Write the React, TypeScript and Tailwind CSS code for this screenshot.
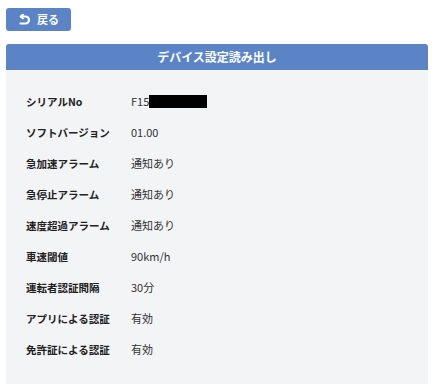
const rows: [string, string][] = [
  ['シリアルNo', 'F15'],
  ['ソフトバージョン', '01.00'],
  ['急加速アラーム', '通知あり'],
  ['急停止アラーム', '通知あり'],
  ['速度超過アラーム', '通知あり'],
  ['車速閾値', '90km/h'],
  ['運転者認証間隔', '30分'],
  ['アプリによる認証', '有効'],
  ['免許証による認証', '有効'],
];

const App = () => {
  return (
    <div
      className="w-[435px] h-[384px] bg-white px-[6px] pt-[8px]"
      style={{ fontFamily: '"Noto Sans CJK JP", "Noto Sans", sans-serif' }}
    >
      <button className="flex items-center gap-[6px] w-[65px] h-[23px] rounded-[3px] bg-[#5b84c7] pl-[13px] text-[11px] font-bold text-white">
        <svg width="12" height="11" viewBox="0 0 12 11" fill="none" stroke="white" strokeWidth="2.2" strokeLinecap="round" strokeLinejoin="round">
          <path d="M1.5 9.5H6.5a3.5 3.5 0 0 0 0-7H2" />
          <path d="M3.8 0.8L1.8 2.5L3.8 4.2" />
        </svg>
        戻る
      </button>

      <div className="mt-[13px] w-[422px] rounded-[3px] overflow-hidden bg-[#f3f4f6]">
        <div className="h-[26px] flex items-center justify-center bg-[#5b84c7] text-[12px] font-bold text-white">
          デバイス設定読み出し
        </div>
        <div className="pl-[20px] pt-[16px] pb-[25px] flex flex-col">
          {rows.map(([label, value], i) => (
            <div key={label} className="flex items-center h-[31px] text-[10.5px] text-[#222]">
              <div className="w-[105px] font-bold">{label}</div>
              <div className="flex items-center font-normal text-[11px] text-[#333]">
                {value}
                {i === 0 && <span className="inline-block w-[58px] h-[13px] bg-black" />}
              </div>
            </div>
          ))}
        </div>
      </div>
    </div>
  );
};

export default App;
